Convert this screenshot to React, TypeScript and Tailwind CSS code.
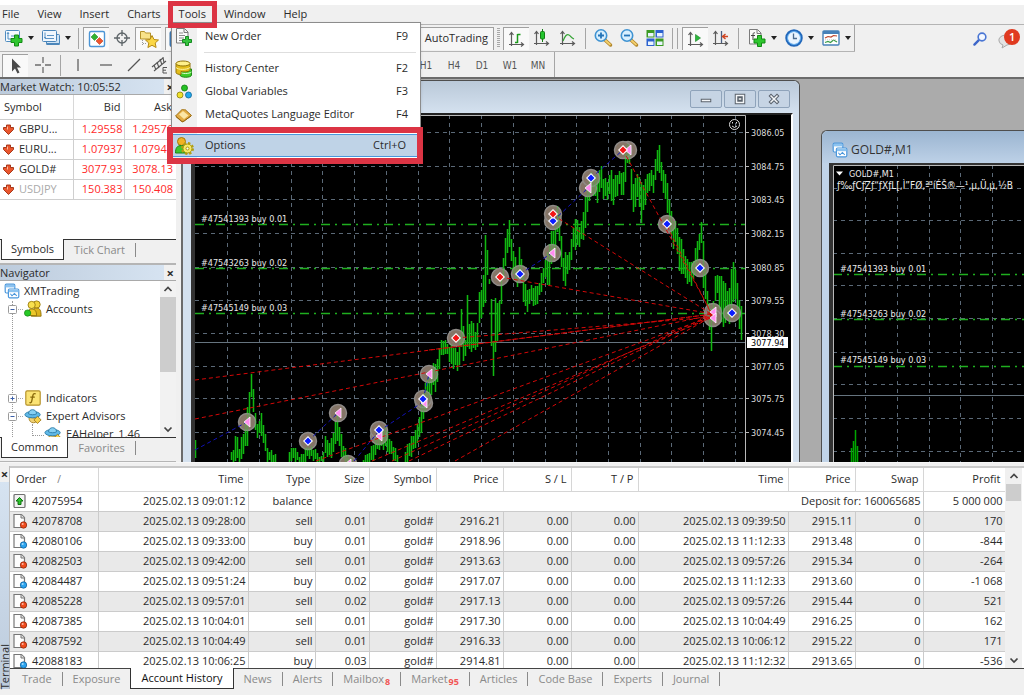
import type { ReactNode } from "react";
import clsx from "clsx";

const uiFont = "font-['Open_Sans','Noto_Sans',sans-serif]";
const chartFont = "font-['DejaVu_Sans_Condensed','DejaVu_Sans',sans-serif]";

/* ---------- data ---------- */

const quotes = [
  { symbol: "GBPU...", bid: "1.29558", ask: "1.29576" },
  { symbol: "EURU...", bid: "1.07937", ask: "1.07947" },
  { symbol: "GOLD#", bid: "3077.93", ask: "3078.13" },
  { symbol: "USDJPY", bid: "150.383", ask: "150.408", muted: true },
];

const orders = [
  ["42078708", "2025.02.13 09:28:00", "sell", "0.01", "2916.21", "2025.02.13 09:39:50", "2915.11", "170"],
  ["42080106", "2025.02.13 09:33:00", "buy", "0.01", "2918.96", "2025.02.13 11:12:33", "2913.48", "-844"],
  ["42082503", "2025.02.13 09:42:00", "sell", "0.01", "2913.63", "2025.02.13 09:57:26", "2915.34", "-264"],
  ["42084487", "2025.02.13 09:51:24", "buy", "0.02", "2917.07", "2025.02.13 11:12:33", "2913.60", "-1 068"],
  ["42085228", "2025.02.13 09:57:01", "sell", "0.02", "2917.13", "2025.02.13 09:57:26", "2915.44", "521"],
  ["42087385", "2025.02.13 10:04:01", "sell", "0.01", "2917.30", "2025.02.13 10:04:49", "2916.25", "162"],
  ["42087592", "2025.02.13 10:04:49", "sell", "0.01", "2916.33", "2025.02.13 10:06:12", "2915.22", "171"],
  ["42088183", "2025.02.13 10:06:25", "buy", "0.03", "2914.81", "2025.02.13 11:12:32", "2913.65", "-536"],
];

const orderColumns = ["Time", "Type", "Size", "Symbol", "Price", "S / L", "T / P", "Time", "Price", "Swap", "Profit"];

// x, high, low of the price envelope
const envelope = [
  [195, 442, 461], [197, 470, 475], [229, 465, 470], [231, 453, 461], [233, 449, 461], [236, 432, 461], [239, 447, 461],
  [241, 438, 461], [244, 430, 448], [246, 420, 445], [248, 394, 440], [250, 385, 408], [251, 375, 400],
  [253, 388, 411], [255, 415, 432], [258, 428, 438], [260, 410, 430], [262, 418, 435], [264, 430, 450],
  [267, 448, 461], [271, 451, 462], [275, 456, 465], [278, 470, 475], [286, 470, 475], [289, 450, 461], [293, 447, 461], [296, 451, 461],
  [300, 456, 465], [304, 452, 463], [308, 445, 458], [312, 448, 458], [316, 452, 461], [322, 458, 465], [325, 438, 455],
  [330, 442, 456], [334, 428, 450], [337, 416, 440], [340, 430, 452], [343, 445, 460], [347, 455, 465],
  [358, 466, 470], [367, 454, 465], [371, 447, 461], [375, 440, 455], [380, 430, 448], [386, 428, 447],
  [390, 440, 456], [395, 450, 463], [400, 463, 470], [403, 463, 470], [407, 444, 461], [411, 437, 455], [415, 432, 445],
  [419, 415, 440], [421, 400, 432], [424, 388, 415], [427, 378, 398], [431, 372, 395], [433, 362, 388],
  [436, 368, 392], [438, 350, 375], [440, 342, 358], [443, 340, 352], [448, 345, 358], [452, 345, 368],
  [455, 350, 366], [457, 352, 368], [459, 335, 365], [461, 310, 350], [463, 325, 360], [465, 342, 358],
  [467, 295, 345], [469, 322, 350], [473, 322, 348], [476, 340, 356], [479, 290, 325], [482, 292, 312],
  [485, 237, 300], [487, 250, 275], [489, 277, 287], [491, 300, 345], [493, 340, 378], [495, 300, 350],
  [498, 305, 338], [500, 292, 320], [502, 265, 288], [505, 240, 265], [509, 218, 245], [511, 240, 262],
  [514, 255, 275], [517, 268, 290], [519, 245, 275], [521, 260, 282], [523, 275, 300], [526, 292, 311],
  [530, 285, 302], [535, 288, 307], [538, 285, 300], [542, 270, 285], [545, 262, 280], [549, 242, 287],
  [551, 232, 262], [555, 228, 250], [557, 206, 232], [560, 215, 250], [562, 258, 282], [565, 254, 284],
  [568, 255, 270], [571, 240, 260], [573, 227, 250], [576, 218, 248], [579, 225, 245], [581, 222, 240],
  [584, 205, 235], [587, 188, 215], [589, 175, 200], [592, 172, 192], [597, 180, 200], [600, 162, 188],
  [603, 178, 198], [607, 182, 198], [610, 168, 194], [613, 178, 205], [617, 175, 195], [620, 166, 182],
  [622, 182, 204], [624, 160, 188], [626, 150, 170], [628, 138, 155], [630, 155, 178], [632, 185, 219],
  [635, 180, 205], [638, 171, 195], [641, 183, 223], [644, 185, 208], [647, 174, 195], [650, 170, 186],
  [653, 174, 190], [656, 154, 175], [659, 143, 172], [661, 163, 183], [664, 172, 195], [667, 183, 210],
  [670, 205, 226], [672, 218, 250], [676, 225, 242], [679, 235, 272], [682, 243, 270], [685, 258, 281],
  [689, 260, 284], [692, 265, 284], [695, 250, 272], [698, 236, 258], [701, 223, 242], [703, 240, 290],
  [706, 285, 300], [708, 297, 315], [711, 310, 351], [713, 300, 325], [715, 278, 300], [718, 273, 292],
  [720, 275, 322], [724, 282, 325], [727, 291, 320], [730, 284, 324], [732, 256, 300], [735, 272, 300],
  [738, 288, 315], [740, 307, 343],
];

function buildBars() {
  let d = "";
  for (let x = 195, seg = 0, n = 0; x <= 741; x += 2, n++) {
    while (seg < envelope.length - 2 && envelope[seg + 1][0] < x) seg++;
    const [x0, h0, l0] = envelope[seg];
    const [x1, h1, l1] = envelope[seg + 1];
    const t = Math.min(1, Math.max(0, (x - x0) / (x1 - x0)));
    const hi = h0 + (h1 - h0) * t + ((n * 7) % 5) - 2;
    const lo = l0 + (l1 - l0) * t + ((n * 11) % 7) - 3;
    if (hi < 461) d += `M${x + 0.5} ${Math.round(hi)}V${Math.round(lo)}`;
  }
  return d;
}

const bars = buildBars();

const gridX = [227, 259, 291, 322, 354, 386, 418, 449, 481, 513, 545, 576, 608, 640, 671, 703, 735];
const priceScale: [number, string][] = [
  [132, "3086.05"], [166, "3084.75"], [199, "3083.45"], [233, "3082.15"], [267, "3080.85"],
  [300, "3079.55"], [333, "3078.30"], [366, "3077.05"], [398, "3075.75"], [432, "3074.45"],
];
const positions: [number, number, string][] = [
  [224, 269, "#47541393 buy 0.01"],
  [268, 314, "#47543263 buy 0.02"],
  [313, 360, "#47545149 buy 0.03"],
];

const lossLines = [
  [195, 380], [195, 419], [316, 461], [372, 461], [392, 461], [409, 461], [455, 461],
  [456, 338], [500, 277], [553, 215], [623, 150], [667, 226], [429, 350],
];
const profitLines = [
  [195, 450, 247, 422], [308, 441, 338, 413], [354, 461, 379, 431], [379, 431, 423, 402],
  [423, 400, 429, 374], [520, 274, 552, 253], [553, 221, 588, 188], [591, 178, 623, 150],
];

type Mark = [number, number, "in" | "buy" | "sell"];
const marks: Mark[] = [
  [247, 422, "in"], [308, 441, "buy"], [338, 413, "in"], [348, 464, "in"], [379, 436, "in"], [379, 430, "buy"],
  [424, 403, "in"], [423, 399, "buy"], [429, 374, "in"], [456, 338, "sell"], [500, 277, "sell"],
  [520, 274, "buy"], [552, 253, "in"], [553, 221, "buy"], [553, 214, "sell"], [588, 188, "in"],
  [591, 178, "buy"], [628, 150, "in"], [623, 150, "sell"], [667, 224, "buy"], [700, 268, "buy"],
  [713, 312, "in"], [713, 318, "in"], [732, 313, "buy"],
];

/* ---------- icons ---------- */

function Svg({ children, size = 20, className }: { children: ReactNode; size?: number; className?: string }) {
  return (
    <svg width={size} height={size} viewBox="0 0 20 20" fill="none" className={clsx("shrink-0", className)} aria-hidden="true">
      {children}
    </svg>
  );
}

const Plus = ({ x = 9, y = 8 }) => (
  <path d={`M${x + 3.5} ${y}h4v3.5h3.5v4h-3.5v3.5h-4v-3.5h-3.5v-4h3.5z`} fill="#2fc62f" stroke="#128a14" strokeWidth="1" />
);

const NewChartIcon = () => (
  <Svg>
    <rect x="1.5" y="2.5" width="14" height="11" rx="1" fill="#f4faff" stroke="#4f8cc0" />
    <path d="M4 4.5v6.500h9M3 6l1-1.500 1 1.500M7 8h4" stroke="#4f8cc0" />
    <Plus x={7} y={7} />
  </Svg>
);
const ProfilesIcon = () => (
  <Svg>
    <rect x="5.500" y="6.500" width="13" height="10" rx="1" fill="#cfe3f5" stroke="#4b86ba" />
    <path d="M5.500 16h13" stroke="#4b86ba" strokeWidth="2" />
    <rect x="1.500" y="2.500" width="14" height="11" rx="1" fill="#f1f7fd" stroke="#4b86ba" />
    <path d="M4 4.500v6h9M6 7.500h7M3 9.500h2" stroke="#5e95c6" />
  </Svg>
);
const MarketIcon = () => (
  <Svg>
    <rect x="2.500" y="2.500" width="15" height="15" rx="1.500" fill="#fff" stroke="#4b95d6" strokeWidth="1.400" />
    <path d="M7.500 4.500l3.500 3.500-3.500 3.500L4 8z" fill="#31b331" stroke="#1c7d1c" strokeWidth=".5" />
    <path d="M12.500 8.500l3.500 3.500-3.500 3.500L9 12z" fill="#f0542c" stroke="#a82d10" strokeWidth=".5" />
  </Svg>
);
const TargetIcon = () => (
  <Svg>
    <circle cx="10" cy="10" r="5" stroke="#5d6468" strokeWidth="1.300" />
    <path d="M10 2v6M10 12v6M2 10h6M12 10h6" stroke="#5d6468" strokeWidth="1.300" />
  </Svg>
);
const NavigatorIcon = () => (
  <Svg>
    <path d="M1.500 2.500h4l1 1.500h5v6h-10z" fill="#f8e28a" stroke="#b4922b" />
    <path d="M3.500 11v6M4 14.500h4" stroke="#999" strokeDasharray="1 1" />
    <path d="M13 6.500l2 4 4.500.5-3.300 3 .9 4.500-4.100-2.200-4.100 2.200.9-4.500-3.300-3 4.500-.5z" fill="#fbd745" stroke="#b58a16" />
  </Svg>
);
const TerminalIcon = () => (
  <Svg>
    <rect x="1.500" y="3" width="16" height="14" rx="1" fill="#fff" stroke="#3f78b0" strokeWidth="2" />
    <path d="M2 5h15" stroke="#3f78b0" strokeWidth="3" />
  </Svg>
);
const Axis = () => <path d="M4.500 17V4M2.500 6l2-2.500 2 2.500M2 15.500h14M14 13.500l2.500 2-2.500 2" stroke="#5b5b5b" strokeWidth="1.200" />;
const BarsIcon = () => (
  <Svg>
    <Axis />
    <path d="M10.500 5v9M10.500 5.500h3M8 13.500h2.500" stroke="#1c9a1c" strokeWidth="1.500" />
  </Svg>
);
const CandlesIcon = () => (
  <Svg>
    <Axis />
    <path d="M10.500 1v13" stroke="#147d14" />
    <rect x="8.500" y="3.500" width="4" height="7.500" rx="1" fill="#22c42d" stroke="#147d14" />
  </Svg>
);
const LineIcon = () => (
  <Svg>
    <Axis />
    <path d="M5 13c2-5 4-7.500 6-6 2 1.200 2 3 5 4" stroke="#36a436" strokeWidth="1.300" />
  </Svg>
);
const ZoomIcon = ({ plus = false }) => (
  <Svg>
    <path d="M12 12l5.500 5" stroke="#b1862a" strokeWidth="3.500" strokeLinecap="round" />
    <path d="M12.500 12.500l4.500 4" stroke="#f3cf6d" strokeWidth="1.800" strokeLinecap="round" />
    <circle cx="8" cy="7.500" r="5.700" fill="#d8effe" stroke="#3f93d2" strokeWidth="1.600" />
    <path d={plus ? "M5 7.500h6M8 4.500v6" : "M5 7.500h6"} stroke="#2474b8" strokeWidth="1.800" />
  </Svg>
);
const TileIcon = () => (
  <Svg>
    <path d="M1.500 2h8v7.500h-8zM10.500 10.500h8V18h-8z" fill="#3b9a22" />
    <path d="M10.500 2h8v7.500h-8zM1.500 10.500h8V18h-8z" fill="#2c62cf" />
    <path d="M3 5h5.500v3.500H3zM12 5h5.500v3.500H12zM3 13.500h5.500V17H3zM12 13.500h5.500V17H12z" fill="#e9f4ff" />
  </Svg>
);
const AutoScrollIcon = () => (
  <Svg>
    <Axis />
    <path d="M9.500 5.500v7l5-3.500z" fill="#29b83a" stroke="#158022" strokeWidth=".6" />
  </Svg>
);
const ShiftIcon = () => (
  <Svg>
    <Axis />
    <path d="M10.500 3v12" stroke="#4a5d80" strokeWidth="1.300" />
    <path d="M11 8.500h6M14.500 6l-3 2.500 3 2.500" stroke="#cf4523" strokeWidth="1.400" />
  </Svg>
);
const Sheet = () => <path d="M2.500 1.500h8l3.500 3.500v11H2.500zM10 1.500v4h4" fill="#fafafa" stroke="#7b7b7b" />;
const IndicatorAddIcon = () => (
  <Svg>
    <Sheet />
    <path d="M8 5c-2-1-2 1-2 3v4M4 7.500h4" stroke="#444" />
    <Plus x={7} y={7.500} />
  </Svg>
);
const ClockIcon = () => (
  <Svg>
    <circle cx="10" cy="10" r="7.500" fill="#eaf5ff" stroke="#2268bb" strokeWidth="2.500" />
    <circle cx="10" cy="10" r="6.500" stroke="#6bb4f2" />
    <path d="M9.500 5.500V10.500H13" stroke="#4c6c8f" strokeWidth="1.300" />
  </Svg>
);
const TemplateIcon = () => (
  <Svg>
    <rect x="2" y="3" width="16" height="14" rx="1" fill="#fff" stroke="#4781b8" strokeWidth="1.400" />
    <path d="M2 4.500h16" stroke="#4781b8" strokeWidth="3" />
    <path d="M4 10l3-1.500 3 .5 2.500-1.500L16 8" stroke="#bf4429" strokeWidth="1.200" />
    <path d="M4 14.500l3-1 2.500 1 3-2.500L16 14" stroke="#3c9d4a" strokeWidth="1.200" />
    <path d="M4 11.800h12" stroke="#ccc" strokeDasharray="1 1" />
  </Svg>
);
const SearchIcon = () => (
  <Svg size={16}>
    <path d="M8.500 11.500L3 17" stroke="#3d66c9" strokeWidth="3" strokeLinecap="round" />
    <circle cx="12.500" cy="7.500" r="4.800" fill="#f4f8ff" stroke="#4a76d4" strokeWidth="2" />
  </Svg>
);
const NewOrderIcon = () => (
  <Svg>
    <Sheet />
    <path d="M5 6h4M5 8.500h6M5 11h5M5 13.500h3" stroke="#8a8a8a" />
    <path d="M11.500 9.500h3v3h3v3h-3v3h-3v-3h-3v-3h3z" fill="#36c43f" stroke="#158a20" />
  </Svg>
);
const HistoryIcon = () => (
  <Svg>
    <path d="M6 10v6c0 3 11.500 3 11.500 0v-6z" fill="#3ecb2a" stroke="#1f8a17" />
    <path d="M6 13c2 2 9 2 11.500 0" stroke="#d9ffd0" />
    <path d="M2 4.500v9c0 1.500 3 2 5 2v-3c4 .8 9 .3 9-2v-6z" fill="#e3bd1b" stroke="#937509" />
    <ellipse cx="9" cy="4.500" rx="7" ry="2.500" fill="#fff08a" stroke="#937509" />
    <path d="M2 8.500c2 2.500 11 2.500 14 0" stroke="#fff3a0" />
  </Svg>
);
const VariablesIcon = () => (
  <Svg>
    <circle cx="10.500" cy="6" r="3" fill="#24c124" stroke="#13790f" strokeWidth=".8" />
    <circle cx="6" cy="13" r="3" fill="#f0e12a" stroke="#8a7c0a" strokeWidth=".8" />
    <circle cx="14.500" cy="13" r="3" fill="#23a9ec" stroke="#0d6698" strokeWidth=".8" />
  </Svg>
);
const EditorIcon = () => (
  <Svg>
    <path d="M1.500 11l7-7c.5 1 2 1 2.500.500l6.500 6-6 4.500c-2 1.500-3 2.500-4 1.500z" fill="#e3ad45" stroke="#a1741a" />
    <path d="M5 9.500l4-3.500 5.500 4.500-4.500 3.500z" fill="#fbe6a6" />
    <path d="M2 11.500l5.500 4.500c1.500 1 2.500 0 4-1l5.500-4" stroke="#94640f" />
  </Svg>
);
const OptionsIcon = () => (
  <Svg>
    <circle cx="7.500" cy="5.500" r="4" fill="#f0b324" stroke="#a3760d" />
    <path d="M1.500 17c0-5 1.500-7.500 6-7.500s6 2.500 6 7.500z" fill="#3ec42e" stroke="#1d8416" />
    <circle cx="13.500" cy="12.500" r="5" stroke="#b3a014" strokeWidth="3" strokeDasharray="2.200 1.700" />
    <circle cx="13.500" cy="12.500" r="4.500" fill="#f7ea68" stroke="#a8960f" />
    <circle cx="13.500" cy="12.500" r="1.500" fill="#fff" stroke="#a8960f" />
  </Svg>
);
const WindowsIcon = () => (
  <Svg size={16}>
    <rect x="1.500" y="1.500" width="12" height="11" rx="1.500" fill="#fff" stroke="#4b97dc" strokeWidth="1.500" />
    <path d="M2 4h11" stroke="#8cc3f0" strokeWidth="3" />
    <rect x="5.500" y="7.500" width="13" height="11" rx="1.500" fill="#fff" stroke="#4b97dc" strokeWidth="1.500" />
    <path d="M6 10h12" stroke="#8cc3f0" strokeWidth="3" />
    <path d="M8 13.500l2 2.500 3-3 3 3" stroke="#4b97dc" strokeWidth="1.300" />
  </Svg>
);
const AccountsIcon = () => (
  <Svg size={18}>
    <circle cx="14" cy="5" r="4" fill="#f3d339" stroke="#9a7a0b" />
    <path d="M8 18c0-6 2-9 6-9s5 3 5 9z" fill="#dcb21c" stroke="#8f700a" />
    <circle cx="8.500" cy="5.500" r="4" fill="#f9e04e" stroke="#9a7a0b" />
    <path d="M4 17c0-5 1-7 4.500-7s5.500 2 5.500 7.500z" fill="#edc829" stroke="#8f700a" />
    <circle cx="4" cy="14.500" r="3.500" fill="#27c827" stroke="#148514" strokeWidth=".8" />
  </Svg>
);
const FunctionIcon = () => (
  <Svg size={18}>
    <rect x="2" y="2" width="16" height="16" rx="1.500" fill="#fbe374" stroke="#b5912a" strokeWidth="1.300" />
    <path d="M13 5.500c-2.500-1-3 .5-3.400 3L8.700 13c-.4 2-1 2.800-2.700 2M7 9h5" stroke="#8a6a0c" strokeWidth="1.500" />
  </Svg>
);
const ExpertIcon = () => (
  <Svg size={18}>
    <path d="M5.500 11.500c0 4 2 6 5 6s4-2 4.500-5z" fill="#f0d175" stroke="#a57f1e" />
    <ellipse cx="9.500" cy="8.500" rx="8.500" ry="3.500" fill="#5fb9e8" stroke="#2b7aa6" />
    <path d="M5 7.500c0-6 9-6 9 0-2 1.500-7 1.500-9 0z" fill="#86d0f3" stroke="#2b7aa6" />
    <path d="M15 10.500l4 3.800-4 4-4-4z" fill="#f6d24e" stroke="#a57f1e" />
  </Svg>
);
const DownIcon = () => (
  <svg width="11" height="11" viewBox="0 0 11 11" className="shrink-0" aria-hidden="true">
    <path d="M3.500 1h4v2.500h3v2l-5 5-5-5v-2h3z" fill="#e9552c" stroke="#9f2c0e" strokeWidth=".9" />
    <path d="M4.500 2.500v3" stroke="#ffb79a" />
  </svg>
);
const OrderIcon = ({ kind }: { kind: string }) => (
  <svg width="15" height="16" viewBox="0 0 15 16" className="shrink-0" aria-hidden="true">
    {kind === "balance" ? (
      <>
        <rect x="1" y="1.500" width="11" height="13" rx="1" fill="#f2f2f2" stroke="#707070" strokeWidth="1.200" />
        <path d="M6.500 4.500L10 8H8v3.500H5V8H3z" fill="#2dc52d" stroke="#0e6f0e" />
      </>
    ) : (
      <>
        <path d="M1 1.500h7.500L11.500 4.500v10H1z" fill="#fdfdfd" stroke="#777" strokeWidth="1.200" />
        <path d="M8 1.500v3.500h3.500" fill="#ddd" stroke="#777" />
        <circle cx="10.500" cy="12" r="3.200" fill={kind === "sell" ? "#ee4a1c" : "#2ba3ee"} stroke={kind === "sell" ? "#8f2507" : "#0e5f9c"} strokeWidth=".8" />
        <circle cx="9.700" cy="11" r="1" fill="#fff" opacity=".6" />
      </>
    )}
  </svg>
);

/* ---------- toolbars ---------- */

function Tool({ label, pressed, wide, children }: { label: string; pressed?: boolean; wide?: boolean; children: ReactNode }) {
  return (
    <button
      type="button"
      aria-label={label}
      className={clsx(
        "flex h-[23px] shrink-0 items-center justify-center",
        wide ? "w-[37px] gap-1" : "w-[26px]",
        pressed && "border-t border-l border-[#a0a0a0] bg-[#f9f9f9]"
      )}
    >
      {children}
      {wide && <span className="h-0 w-0 border-x-[3px] border-t-[4px] border-x-transparent border-t-[#222]" />}
    </button>
  );
}

const Sep = () => <span className="mx-1 h-[21px] w-px shrink-0 bg-[#a5a5a5]" />;

function MainToolbar() {
  return (
    <div className="flex h-7 items-center border-t border-[#b4b4b4]">
      <div className="flex h-full items-center border-b border-[#b4b4b4]">
        <Tool label="New chart" wide><NewChartIcon /></Tool>
        <Tool label="Profiles" wide><ProfilesIcon /></Tool>
        <Sep />
        <Tool label="Market Watch" pressed><MarketIcon /></Tool>
        <Tool label="Data window"><TargetIcon /></Tool>
        <Tool label="Navigator" pressed><NavigatorIcon /></Tool>
        <span className="w-1" />
        <Tool label="Terminal" pressed><TerminalIcon /></Tool>
        <button type="button" className="flex h-[23px] w-[303px] shrink-0 items-center justify-end border-t border-r border-[#a0a0a0] bg-[#f6f6f6] pr-[5px]">
          AutoTrading
        </button>
        <span className="mx-[3px] h-5 w-[3px] bg-[repeating-linear-gradient(#a8a8a8_0_1px,transparent_1px_2px)]" />
        <Tool label="Bar chart" pressed><BarsIcon /></Tool>
        <Tool label="Candlesticks"><CandlesIcon /></Tool>
        <Tool label="Line chart"><LineIcon /></Tool>
        <Sep />
        <Tool label="Zoom in"><ZoomIcon plus /></Tool>
        <Tool label="Zoom out"><ZoomIcon /></Tool>
        <Tool label="Tile windows"><TileIcon /></Tool>
        <span className="ml-1 h-[21px] w-px bg-[#a5a5a5]" />
        <Sep />
        <Tool label="Auto scroll" pressed><AutoScrollIcon /></Tool>
        <Tool label="Chart shift"><ShiftIcon /></Tool>
        <Sep />
        <Tool label="Indicators" wide><IndicatorAddIcon /></Tool>
        <Tool label="Periods" wide><ClockIcon /></Tool>
        <Tool label="Templates" wide><TemplateIcon /></Tool>
        <span className="h-full w-px bg-[#a5a5a5]" />
      </div>
      <div className="ml-auto flex items-center gap-2">
        <button type="button" aria-label="Search"><SearchIcon /></button>
        <button type="button" aria-label="Messages" className="relative h-5 w-7">
          <svg width="28" height="20" viewBox="0 0 28 20" aria-hidden="true">
            <path d="M3 12a7 5 0 1 1 8 4l-5 3 1-3a6 5 0 0 1-4-4z" fill="#e3e3e3" stroke="#a9a9a9" />
            <circle cx="16" cy="8" r="8" fill="#e03a20" />
          </svg>
          <span className="absolute top-0 left-[13px] leading-4 font-semibold text-white">1</span>
        </button>
      </div>
    </div>
  );
}

function LineToolbar() {
  return (
    <div className="flex h-[25px] items-center text-[#555]">
      <div className="flex h-full w-[555px] items-center border-r border-[#a5a5a5] pt-px pl-[2px]">
        <Tool label="Cursor" pressed>
          <Svg><path d="M6 2.500v13l3-3 2.500 5 2-1-2.500-5h4z" fill="#4a4a4a" /></Svg>
        </Tool>
        <span className="w-[2px]" />
        <Tool label="Crosshair">
          <Svg><path d="M10 2v6M10 12v6M2 10h6M12 10h6" stroke="#6b6b6b" strokeWidth="1.300" /></Svg>
        </Tool>
        <Sep />
        <Tool label="Vertical line"><Svg><path d="M10 4v12" stroke="#555" strokeWidth="1.200" /></Svg></Tool>
        <span className="w-[2px]" />
        <Tool label="Horizontal line"><Svg><path d="M4 10h12" stroke="#555" strokeWidth="1.200" /></Svg></Tool>
        <span className="w-[2px]" />
        <Tool label="Trend line"><Svg><path d="M4 16L16 4" stroke="#555" strokeWidth="1.200" /></Svg></Tool>
        <Tool label="Equidistant channel">
          <Svg>
            <path d="M2 12L13 3M4 16L16 6M4 10l2 5M7 7l2 6M10 4l2 6M13 2l1 6" stroke="#555" strokeWidth="1.100" />
            <path d="M17 12.500h-4v5.500h4M13 15.200h3" stroke="#555" />
          </Svg>
        </Tool>
        <div className="ml-auto flex pr-[2px] text-[10px]">
          {["H1", "H4", "D1", "W1", "MN"].map((p) => (
            <button key={p} type="button" className="w-7 text-center font-['DejaVu_Sans_Condensed',sans-serif]">{p}</button>
          ))}
        </div>
      </div>
    </div>
  );
}

/* ---------- tools menu ---------- */

function MenuItem({ icon, label, keys, active }: { icon: ReactNode; label: string; keys: string; active?: boolean }) {
  return (
    <button
      type="button"
      role="menuitem"
      className={clsx(
        "flex h-[23px] w-full items-center pr-3 pl-[2px]",
        active && "bg-[#bfd3e7] outline outline-1 -outline-offset-1 outline-[#4a98dc]"
      )}
    >
      {icon}
      <span className="ml-[11px]">{label}</span>
      <span className="ml-auto">{keys}</span>
    </button>
  );
}

function ToolsMenu() {
  return (
    <div role="menu" className="absolute top-[22px] left-[171px] z-20 w-[250px] border border-[#8c8c8c] bg-[linear-gradient(to_right,#f0f0f0_25px,#fff_25px)] py-[2px] shadow">
      <MenuItem icon={<NewOrderIcon />} label="New Order" keys="F9" />
      <hr className="my-1 mr-1 ml-8 border-[#dedede]" />
      <MenuItem icon={<HistoryIcon />} label="History Center" keys="F2" />
      <MenuItem icon={<VariablesIcon />} label="Global Variables" keys="F3" />
      <MenuItem icon={<EditorIcon />} label="MetaQuotes Language Editor" keys="F4" />
      <div className="relative mt-2 mr-[2px]">
        <MenuItem icon={<OptionsIcon />} label="Options" keys="Ctrl+O" active />
        <span className="pointer-events-none absolute -inset-x-[5px] -inset-y-[7px] border-[6px] border-[#dc3444]" />
      </div>
    </div>
  );
}

function MenuBar() {
  return (
    <nav className="flex h-[19px] items-center gap-[18px] pl-[2px]">
      {["File", "View", "Insert", "Charts", "Tools", "Window", "Help"].map((name) => (
        <button key={name} type="button" className="relative">
          {name}
          {name === "Tools" && (
            <span className="pointer-events-none absolute -inset-x-[11px] -inset-y-[5px] z-30 border-[5px] border-[#dc3444]" />
          )}
        </button>
      ))}
    </nav>
  );
}

/* ---------- left dock ---------- */

function DockTitle({ children }: { children: ReactNode }) {
  return (
    <div className="flex h-4 shrink-0 items-center justify-between border-b border-[#a9a9a9] bg-[linear-gradient(to_right,#bccbdc,#d6e3f1_93%,#f0f0f0_93%)] pr-[2px]">
      <h2 className="leading-4">{children}</h2>
      <button type="button" aria-label="Close" className="text-[13px] leading-3 font-bold">×</button>
    </div>
  );
}

function DockTabs({ active, other }: { active: string; other: string }) {
  return (
    <div className="flex h-[21px] shrink-0">
      <span className="w-px border-t border-[#333]" />
      <button type="button" className="border-x border-b border-[#333] bg-white px-[9px]">{active}</button>
      <div className="flex flex-1 items-center border-t border-[#333]">
        <button type="button" className="px-[10px] text-[#8a8a8a]">{other}</button>
        <span className="h-[14px] w-px bg-[#8a8a8a]" />
      </div>
    </div>
  );
}

function MarketWatch() {
  return (
    <section className="flex h-[186px] shrink-0 flex-col border-b-2 border-[#b5b5b5] pb-[3px]">
      <DockTitle>Market Watch: 10:05:52</DockTitle>
      <div className="flex-1 bg-white">
        <table className="w-full table-fixed">
          <colgroup>
            <col className="w-[42%]" />
            <col className="w-[29%]" />
            <col />
          </colgroup>
          <thead>
            <tr className="h-6 border-b border-[#cfcfcf] [&>th]:font-normal">
              <th className="pl-1 text-left">Symbol</th>
              <th className="border-x border-[#d8d8d8] pr-1 text-right">Bid</th>
              <th className="pr-1 text-right">Ask</th>
            </tr>
          </thead>
          <tbody>
            {quotes.map((q) => (
              <tr key={q.symbol} className="h-5 border-b border-[#cfcfcf]">
                <td className={clsx("pl-[3px]", q.muted && "text-[#aaa]")}>
                  <span className="flex items-center gap-[5px]"><DownIcon />{q.symbol}</span>
                </td>
                <td className="border-x border-[#cfcfcf] pr-[2px] text-right text-[#ff2a2a]">{q.bid}</td>
                <td className="pr-[3px] text-right text-[#ff2a2a]">{q.ask}</td>
              </tr>
            ))}
          </tbody>
        </table>
      </div>
      <DockTabs active="Symbols" other="Tick Chart" />
    </section>
  );
}

function Expander({ open }: { open?: boolean }) {
  return (
    <svg width="16" height="9" viewBox="0 0 16 9" className="shrink-0" aria-hidden="true">
      <rect x=".5" y=".5" width="8" height="8" rx="1" fill="#fff" stroke="#9a9a9a" />
      <path d={open ? "M2.500 4.500h4" : "M2.500 4.500h4M4.500 2.500v4"} stroke="#3b5fa8" />
      <path d="M10 4.500h6" stroke="#aaa" strokeDasharray="1 1" />
    </svg>
  );
}

function Chevron({ up }: { up?: boolean }) {
  return (
    <svg width="10" height="16" viewBox="0 0 10 16" aria-hidden="true">
      <path d={up ? "M1.500 10L5 6.500 8.500 10" : "M1.500 6.500L5 10l3.500-3.500"} fill="none" stroke="#444" strokeWidth="1.700" />
    </svg>
  );
}

function Navigator() {
  return (
    <section className="flex min-h-0 flex-1 flex-col border-b border-[#b5b5b5] pb-[3px]">
      <DockTitle>Navigator</DockTitle>
      <div className="flex min-h-0 flex-1 bg-white">
        <ul className="relative min-w-0 flex-1 overflow-hidden pt-px [&>li]:relative [&>li]:flex [&>li]:h-[18px] [&>li]:items-center">
          <span className="absolute top-5 bottom-0 left-3 border-l border-dotted border-[#999]" />
          <li className="gap-1 pl-1"><WindowsIcon />XMTrading</li>
          <li className="pl-2"><Expander open /><AccountsIcon /><span className="pl-1">Accounts</span></li>
          <li className="mt-[71px] pl-2"><Expander /><FunctionIcon /><span className="pl-1">Indicators</span></li>
          <li className="pl-2"><Expander open /><ExpertIcon /><span className="pl-1">Expert Advisors</span></li>
          <li className="pl-8">
            <span className="-mt-2 h-3 w-3 border-b border-l border-dotted border-[#999]" />
            <ExpertIcon /><span className="pl-1">EAHelper_1.46</span>
          </li>
        </ul>
        <div className="flex w-4 flex-col items-center bg-[#f2f2f2]">
          <Chevron up />
          <span className="h-[75px] w-full bg-[#cdcdcd]" />
          <span className="mt-auto flex"><Chevron /></span>
        </div>
      </div>
      <DockTabs active="Common" other="Favorites" />
    </section>
  );
}

/* ---------- charts ---------- */

function MarkShape({ mark: [x, y, kind] }: { mark: Mark }) {
  if (kind === "in") return <path d={`M${x + 3} ${y - 5}v10l-6-5z`} fill="#ff8cf0" stroke="#fff" strokeWidth=".8" />;
  return (
    <>
      <path d={`M${x} ${y - 5}l5 5-5 5-5-5z`} fill="#fff" />
      <path d={`M${x} ${y - 3.500}l3.500 3.500-3.500 3.500-3.500-3.500z`} fill={kind === "buy" ? "#0a1cff" : "#f41414"} />
    </>
  );
}

function GoldChart() {
  return (
    <svg width="596" height="347" viewBox="195 115 596 347" className={clsx("block", chartFont)} role="img" aria-label="GOLD# price chart">
      <rect x="195" y="115" width="596" height="347" fill="#000" />
      <g stroke="#5b6977" strokeDasharray="4 4">
        {gridX.map((x) => <path key={x} d={`M${x + 0.5} 115V462`} />)}
        {priceScale.map(([y]) => <path key={y} d={`M195 ${y + 0.5}H745`} />)}
      </g>
      <g stroke="#1fae1f" strokeDasharray="9 5 2 5" strokeWidth="1.300">
        {positions.map(([y]) => <path key={y} d={`M195 ${y + 0.5}H745`} />)}
      </g>
      <path d="M195 342.500H746" stroke="#66747f" />
      <path d={bars} stroke="#00a800" strokeWidth="1.500" />
      <g fill="#857567" stroke="#8f8b88" strokeWidth="1.500">
        {marks.map(([x, y], i) => <circle key={i} cx={x} cy={y} r="8.500" />)}
      </g>
      <path d={bars} stroke="#35d435" strokeWidth="1.300" opacity=".35" />
      <g stroke="#d40808" strokeDasharray="4 3">
        {lossLines.map(([x, y], i) => <path key={i} d={`M${x} ${y}L713 ${314 + (i % 4)}`} />)}
      </g>
      <g stroke="#1111b8" strokeDasharray="4 3">
        {profitLines.map(([x0, y0, x1, y1]) => <path key={x0} d={`M${x0} ${y0}L${x1} ${y1}`} />)}
      </g>
      {marks.map((m, i) => <MarkShape key={i} mark={m} />)}
      <g fill="#e8e8e8" fontSize="9">
        {positions.map(([y, , text]) => <text key={y} x="201" y={y - 2}>{text}</text>)}
      </g>
      <path d="M195 115.500H745.500V462" stroke="#b9b9b9" fill="none" />
      <g fill="none" stroke="#ddd">
        <circle cx="734.500" cy="124.500" r="5" />
        <path d="M732 126q2.500 3 5 0M732.500 122v1.500M736.500 122v1.500" />
      </g>
      <g fill="#dcdcdc" fontSize="9">
        {priceScale.map(([y, label]) => (
          <g key={y}>
            <path d={`M746 ${y + 0.5}h3`} stroke="#b9b9b9" />
            <text x="751" y={y + 4}>{label}</text>
          </g>
        ))}
      </g>
      <rect x="747" y="337" width="41" height="11" fill="#fff" />
      <text x="751" y="346" fontSize="9" fill="#000">3077.94</text>
    </svg>
  );
}

function SecondChart() {
  const xs = [865, 897, 929, 960, 992];
  const ys = [188, 220, 253, 285, 318, 352, 384, 418, 451];
  return (
    <svg width="260" height="297" viewBox="833 165 260 297" className={clsx("block", chartFont)} role="img" aria-label="GOLD# M1 chart">
      <rect x="833" y="165" width="260" height="297" fill="#000" />
      <g stroke="#5b6977" strokeDasharray="4 4">
        {xs.map((x) => <path key={x} d={`M${x + 0.5} 165V462`} />)}
        {ys.map((y) => <path key={y} d={`M833 ${y + 0.5}H1093`} />)}
      </g>
      <g stroke="#1fae1f" strokeDasharray="9 5 2 5" strokeWidth="1.300">
        {[274, 319, 366].map((y) => <path key={y} d={`M833 ${y + 0.5}H1093`} />)}
      </g>
      <path d="M833 395.500H1093" stroke="#66747f" />
      <path d="M851.500 448V462M853.500 441V462M855.500 430V462M857.500 446V462" stroke="#00a800" strokeWidth="1.500" />
      <path d="M833.500 462V165.500H1093" stroke="#b9b9b9" fill="none" />
      <path d="M836 171.500h7l-3.500 4z" fill="#fff" />
      <g fill="#ececec" fontSize="9">
        <text x="849" y="177">GOLD#,M1</text>
        <text x="837" y="189" fontSize="10">ƒ‰ƒCƒZƒ“ƒXƒL[‚Ì”FØ‚ª³íÉŠ®—¹‚µ‚Ü‚µ‚½B</text>
        {positions.map(([key, y, text]) => <text key={key} x="840" y={y + 3}>{text}</text>)}
      </g>
    </svg>
  );
}

function WindowButton({ label, d }: { label: string; d: string }) {
  return (
    <button type="button" aria-label={label} className="flex h-[18px] w-8 items-center justify-center rounded-xs border border-[#8fa3ba] bg-[#c6d4e4]">
      <svg width="14" height="12" viewBox="0 0 14 12" fill="none" aria-hidden="true">
        <path d={d} stroke="#59616b" strokeWidth="3.500" strokeLinecap="square" />
        <path d={d} stroke="#f4f6f8" strokeWidth="1.500" strokeLinecap="square" />
      </svg>
    </button>
  );
}

function Workspace() {
  return (
    <main className="relative min-w-0 flex-1 overflow-hidden border-l-2 border-[#6b6b6b] bg-[#ababab]">
      <section className="absolute top-px left-0 rounded-t-md border-t border-r border-[#4e4e4e] bg-[#d4e1ef] pr-[6px] pl-2">
        <div className="-mr-[6px] -ml-2 flex h-8 items-center justify-end gap-[2px] rounded-t-md bg-linear-to-b from-[#bac9d9] to-[#d4e1ef] pt-1 pr-[9px]">
          <WindowButton label="Minimize" d="M3.500 7.500h7" />
          <WindowButton label="Maximize" d="M3.500 2.500h7v7h-7zM6.500 6h1" />
          <WindowButton label="Close" d="M4 3l6 6M10 3l-6 6" />
        </div>
        <div className="border-t-2 border-r-2 border-l-4 border-t-[#222] border-r-white border-l-[#333]">
          <GoldChart />
        </div>
      </section>
      <section className="absolute top-[51px] left-[638px] rounded-tl-md border-t border-l border-[#4e4e4e] bg-[#c0d3e8] pl-[7px]">
        <div className="-ml-[7px] flex h-8 items-center gap-[3px] rounded-tl-md bg-linear-to-b from-[#9bb5d1] to-[#bdd1e7] pt-[6px] pl-[10px] text-xs text-[#333]">
          <WindowsIcon />GOLD#,M1
        </div>
        <div className="border-t-2 border-l-4 border-[#333]">
          <SecondChart />
        </div>
      </section>
    </main>
  );
}

/* ---------- terminal ---------- */

const cell = "overflow-hidden border-r border-b border-[#cbcbcb] pr-[2px] text-right whitespace-nowrap";

function OrderTable() {
  return (
    <table className="w-full table-fixed">
      <colgroup>
        <col className="w-[88px]" />
        <col className="w-[150px]" />
        <col className="w-[67px]" />
        <col className="w-[54px]" />
        <col className="w-[67px]" />
        <col className="w-[67px]" />
        <col className="w-[68px]" />
        <col className="w-[67px]" />
        <col className="w-[150px]" />
        <col className="w-[67px]" />
        <col className="w-[68px]" />
        <col className="w-[82px]" />
      </colgroup>
      <thead>
        <tr className="h-[23px] [&>th]:border-r [&>th]:border-b [&>th]:border-[#d6d6d6] [&>th]:font-normal">
          <th className="pl-[6px] text-left">Order <span className="pl-2 text-[10px] text-[#777]">/</span></th>
          {orderColumns.map((name, i) => (
            <th key={i} className="pr-1 text-right">{name}</th>
          ))}
        </tr>
      </thead>
      <tbody>
        <tr className="h-5">
          <td className={cell}><span className="flex items-center gap-1 pl-[3px]"><OrderIcon kind="balance" />42075954</span></td>
          <td className={cell}>2025.02.13 09:01:12</td>
          <td className={cell}>balance</td>
          <td className={cell} colSpan={8}>Deposit for: 160065685</td>
          <td className={cell}>5 000 000</td>
        </tr>
        {orders.map(([id, opened, type, size, price, closed, closePrice, profit], i) => (
          <tr key={id} className={clsx("h-5", i % 2 === 0 && "bg-[#e9e9e9]")}>
            <td className={cell}><span className="flex items-center gap-1 pl-[3px]"><OrderIcon kind={type} />{id}</span></td>
            {[opened, type, size, "gold#", price, "0.00", "0.00", closed, closePrice, "0", profit].map((value, j) => (
              <td key={j} className={cell}>{value}</td>
            ))}
          </tr>
        ))}
      </tbody>
    </table>
  );
}

function TabButton({ name, count }: { name: string; count?: string }) {
  return (
    <button type="button" className="flex px-[10px] text-[#8a8a8a]">
      {name}
      {count && <span className="translate-y-1 pl-px text-[9px] font-bold text-[#f25555]">{count}</span>}
    </button>
  );
}

const Divider = () => <span className="h-[14px] w-px bg-[#8a8a8a]" />;

function Terminal() {
  const rest: [string, string?][] = [
    ["News"], ["Alerts"], ["Mailbox", "8"], ["Market", "95"], ["Articles"], ["Code Base"], ["Experts"], ["Journal"],
  ];
  return (
    <section className="flex h-[233px] shrink-0 border-t border-[#f6f6f6] bg-[#f0f0f0] pt-[3px] pb-[6px]">
      <div className="flex w-[10px] shrink-0 flex-col items-center border-r border-[#bbb]">
        <button type="button" aria-label="Close" className="h-4 text-[13px] leading-3 font-bold">×</button>
        <div className="flex w-full flex-1 items-end bg-linear-to-b from-[#d6e3f1] to-[#bccbdc]">
          <h2 className="rotate-180 leading-[9px] whitespace-nowrap [writing-mode:vertical-rl]">Terminal</h2>
        </div>
      </div>
      <div className="flex min-w-0 flex-1 flex-col border-t-2 border-[#c9c9c9]">
        <div className="flex min-h-0 flex-1 bg-white">
          <div className="min-w-0 flex-1 overflow-hidden"><OrderTable /></div>
          <div className="mr-[2px] flex w-[17px] flex-col items-center bg-[#f0f0f0]">
            <Chevron up />
            <span className="h-[17px] w-[15px] bg-[#cdcdcd]" />
            <span className="mt-auto flex"><Chevron /></span>
          </div>
        </div>
        <div className="flex h-[21px] shrink-0">
          <div className="flex items-center border-t border-[#444] pl-[2px]">
            <TabButton name="Trade" />
            <Divider />
            <TabButton name="Exposure" />
          </div>
          <button type="button" className="border-x border-b border-[#333] bg-white px-[10px] text-[#111]">Account History</button>
          <div className="flex flex-1 items-center border-t border-[#444]">
            {rest.map(([name, count]) => (
              <div key={name} className="flex items-center">
                <TabButton name={name} count={count} />
                <Divider />
              </div>
            ))}
          </div>
        </div>
      </div>
    </section>
  );
}

export default function App() {
  return (
    <div className={clsx("relative flex h-screen flex-col overflow-hidden bg-[#f0f0f0] text-[11px] text-[#2b2b2b]", uiFont)}>
      <header className="border-t-[5px] border-b-2 border-t-white border-b-[#6b6b6b]">
        <MenuBar />
        <MainToolbar />
        <LineToolbar />
      </header>
      <ToolsMenu />
      <div className="flex min-h-0 flex-1">
        <aside className="flex w-[181px] shrink-0 flex-col pr-[5px]">
          <MarketWatch />
          <Navigator />
        </aside>
        <Workspace />
      </div>
      <Terminal />
    </div>
  );
}
